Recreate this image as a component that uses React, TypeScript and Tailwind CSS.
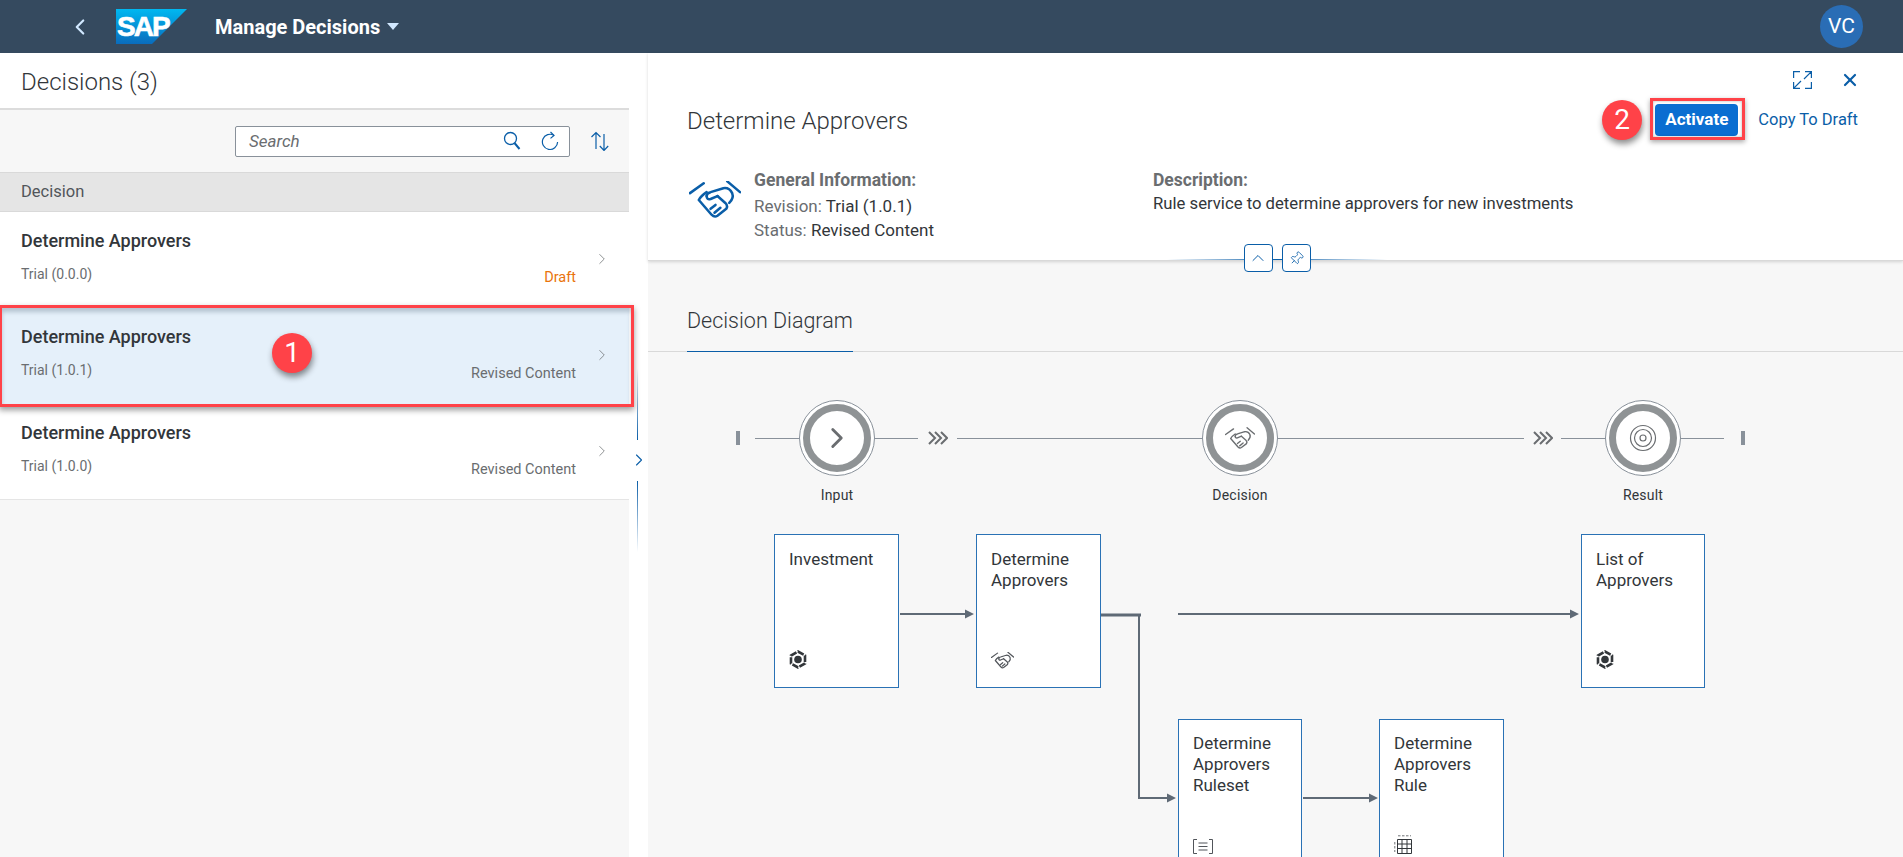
import { ChevronLeft, ChevronRight, ChevronUp, Pin, X } from 'lucide-react';

const rows = [
  { rev: 'Trial (0.0.0)', status: 'Draft', statusCls: 'text-[#e9730c]', selected: false },
  { rev: 'Trial (1.0.1)', status: 'Revised Content', statusCls: 'text-[#6a6d70]', selected: true },
  { rev: 'Trial (1.0.0)', status: 'Revised Content', statusCls: 'text-[#6a6d70]', selected: false },
];

function Handshake({ className, strokeWidth = 2.6 }: { className?: string; strokeWidth?: number }) {
  return (
    <svg viewBox="9 12 53 38" fill="none" stroke="currentColor" strokeWidth={strokeWidth} strokeLinecap="round" strokeLinejoin="round" className={className}>
      <path d="M10 24 24 14M48 12l13 11" />
      <path d="M27 23q-6 4-8 8l13 15q3 3 6 1l9-7q2-3-1-6l-8-7" />
      <path d="M27 27q0-3 4-4l13-4q6-1 9 5 2 5-3 10" />
      <path d="m38 27-7 3q-4 1-4-3M31 40l5-4M35 44l6-5" />
    </svg>
  );
}

function Cube() {
  return (
    <svg viewBox="0 0 18 19" className="h-[19px] w-[18px] text-[#32363a]" fill="none" stroke="currentColor">
      <path d="M9 1.500 16 5.500v8L9 17.500 2 13.500v-8Z" strokeWidth="2.6" strokeDasharray="6.500 1.500" />
      <circle cx="9" cy="9.500" r="3.800" fill="currentColor" stroke="none" />
    </svg>
  );
}

function Ruleset() {
  return (
    <svg viewBox="0 0 20 15" className="h-[15px] w-[20px] text-[#51555a]" fill="none" stroke="currentColor" strokeWidth="1">
      <path d="M4 .5H.5v14H4M16 .5h3.500v14H16M5.500 4h9M5.500 7.500h9M5.500 11h9" />
    </svg>
  );
}

function RuleTable() {
  return (
    <svg viewBox="0 0 18 19" className="h-[19px] w-[18px] text-[#32363a]" fill="none" stroke="currentColor" strokeWidth="1">
      <path d="M3.500 4.500h14v14h-14ZM3.500 9h14M3.500 13.500h14M8 4.500v14M13 4.500v14" />
      <path d="M4 .8h13M.8 7v10" strokeDasharray="2.5 1.500" opacity="0.7" />
    </svg>
  );
}

function Triple() {
  return (
    <svg viewBox="0 0 20 14" className="h-[14px] w-[20px]" fill="none" stroke="#6a6d70" strokeWidth="2">
      <path d="m1 1 6 6-6 6M7 1l6 6-6 6M13 1l6 6-6 6" />
    </svg>
  );
}

function Stage({ left, label, children }: { left: string; label: string; children: React.ReactNode }) {
  return (
    <div className={`absolute top-[48px] flex w-[76px] flex-col items-center ${left}`}>
      <div className="flex h-[76px] w-[76px] items-center justify-center rounded-full border border-[#89919a] bg-white">
        <div className="flex h-[68px] w-[68px] items-center justify-center rounded-full border-[7px] border-[#8f9395] bg-white text-[#6a6d70]">
          {children}
        </div>
      </div>
      <div className="mt-[11px] text-[14px] leading-[16px] tracking-[0.2px] text-[#32363a]">{label}</div>
    </div>
  );
}

function Card({ pos, lines, children }: { pos: string; lines: string[]; children: React.ReactNode }) {
  return (
    <div className={`absolute flex h-[154px] flex-col border border-[#2a72b5] bg-white px-[14px] pb-[18px] ${pos}`}>
      <div className="flex-1 text-[17px] leading-[21px] text-[#32363a]">
        {lines.map((l) => (
          <div key={l}>{l}</div>
        ))}
      </div>
      {children}
    </div>
  );
}

function RedBadge({ n, pos }: { n: string; pos: string }) {
  return (
    <div className={`absolute z-20 flex h-[40px] w-[40px] items-center justify-center rounded-full bg-[#ff4248] text-[28px] text-white shadow-[1px_4px_6px_rgba(0,0,0,0.45)] ${pos}`}>
      {n}
    </div>
  );
}

export default function App() {
  return (
    <div className="flex h-[857px] w-full flex-col overflow-hidden bg-white font-['Roboto',sans-serif] text-[#32363a]">
      <header className="flex h-[53px] shrink-0 items-center bg-[#354a5f] text-white">
        <ChevronLeft size={26} strokeWidth={2} className="ml-[67px] text-[#d1e8ff]" />
        <svg viewBox="0 0 71 35" className="ml-[23px] h-[35px] w-[71px]">
          <defs>
            <linearGradient id="sap" x1="0" y1="0" x2="0" y2="1">
              <stop offset="0" stopColor="#00b8f1" />
              <stop offset="1" stopColor="#0a6cbc" />
            </linearGradient>
          </defs>
          <path d="M0 0h71L36 35H0Z" fill="url(#sap)" />
          <text x="1" y="27" fontFamily="'Liberation Sans',sans-serif" fontWeight="700" fontSize="28" letterSpacing="-2" fill="#fff" stroke="#fff" strokeWidth="0.6">SAP</text>
        </svg>
        <div className="ml-[28px] text-[20px] font-bold">Manage Decisions</div>
        <div className="ml-[7px] h-0 w-0 border-x-[6px] border-t-[7px] border-x-transparent border-t-[#d1e8ff]" />
        <div className="ml-auto mr-[40px] flex h-[43px] w-[43px] items-center justify-center rounded-full bg-[#2a6db5] text-[21px]">VC</div>
      </header>

      <div className="flex min-h-0 flex-1">
        {/* master list */}
        <aside className="relative z-10 flex w-[629px] shrink-0 flex-col bg-[#f7f7f7]">
          <div className="flex h-[57px] items-center border-b-2 border-[#dcdcdc] bg-white pl-[21px] pt-[2px] text-[24px] font-light">Decisions (3)</div>
          <div className="flex h-[62px] items-center pl-[235px]">
            <div className="flex h-[31px] w-[335px] items-center rounded-[2px] border border-[#89919a] bg-white pl-[13px] pr-[10px]">
              <span className="pt-px text-[17px] italic text-[#6a6d70]">Search</span>
              <svg viewBox="0 0 18 20" className="ml-auto h-[20px] w-[18px]" fill="none" stroke="#0a5ea8" strokeWidth="1.3">
                <circle cx="7.500" cy="7.500" r="6" />
                <path d="m11.500 12 5 6" strokeWidth="2" />
              </svg>
              <svg viewBox="0 0 18 20" className="ml-[20px] h-[20px] w-[18px]" fill="none" stroke="#0a5ea8" strokeWidth="1.2">
                <path d="M13 4.400A7.600 7.600 0 1 0 16.600 11" />
                <path d="m9.500 1 3.500 3.400-3.500 3" />
              </svg>
            </div>
            <svg viewBox="0 0 20 20" className="ml-[20px] h-[20px] w-[20px]" fill="none" stroke="#0a5ea8" strokeWidth="1.2">
              <path d="M6 18V1.500M1.500 6 6 1.500 10.500 6M14 3v16.500M9.800 15l4.200 4.500 4.200-4.500" />
            </svg>
          </div>
          <div className="flex h-[40px] items-center border-y border-[#d9d9d9] bg-[#e5e5e5] pl-[21px] text-[16.5px] text-[#51555a]">Decision</div>
          {rows.map((r) => (
            <div
              key={r.rev}
              className={`relative flex h-[96px] items-start pl-[21px] ${r.selected ? 'z-10 bg-[#e5f0fa]' : 'bg-white'} ${r.rev === 'Trial (1.0.0)' ? 'border-b border-[#e5e5e5]' : ''}`}
            >
              <div className="flex-1">
                <div className="mt-[18px] text-[18px] font-medium leading-[22px]">Determine Approvers</div>
                <div className="mt-[13px] text-[14px] leading-[18px] text-[#6a6d70]">{r.rev}</div>
              </div>
              <div className={`mt-[57px] text-[14.5px] leading-[18px] ${r.statusCls}`}>{r.status}</div>
              <ChevronRight size={18} strokeWidth={1} className="ml-[17px] mr-[18px] mt-[38px] text-[#6a6d70]" />
              {r.selected && (
                <>
                  <div className="absolute -left-[1px] -right-[5px] -top-[3px] -bottom-[3px] border-[3px] border-[#ff4248] shadow-[0_3px_6px_rgba(0,0,0,0.4),inset_0_4px_4px_rgba(90,110,130,0.35)]" />
                  <RedBadge n="1" pos="left-[272px] top-[25px]" />
                </>
              )}
            </div>
          ))}
        </aside>

        {/* splitter */}
        <div className="relative w-[19px] shrink-0 bg-white">
          <div className="absolute left-[8px] top-[315px] h-[72px] w-px bg-gradient-to-b from-transparent to-[#0a5ea8]" />
          <ChevronRight size={20} strokeWidth={1.3} className="absolute left-[0px] top-[397px] text-[#0a5ea8]" />
          <div className="absolute left-[8px] top-[428px] h-[71px] w-px bg-gradient-to-b from-[#0a5ea8] to-transparent" />
        </div>

        {/* detail */}
        <main className="flex min-w-0 flex-1 flex-col bg-[#f7f7f7]">
          <section className="relative h-[208px] shrink-0 border-b border-[#d9d9d9] bg-white pl-[39px] pr-[45px] pt-[18px] shadow-[0_1px_3px_rgba(0,0,0,0.15)]">
            <div className="-mr-[2px] flex h-[18px] items-center justify-end gap-[28px] text-[#0a5ea8]">
              <svg viewBox="0 0 19 18" className="h-[18px] w-[19px]" fill="none" stroke="currentColor" strokeWidth="1.2">
                <path d="M.6 7V.6H7M12 .6h6.400V7M18.400 .6 11 8M.6 17.400 8 10M.6 11v6.400H7M12 17.400h6.400V11" />
              </svg>
              <X size={20} strokeWidth={2.6} />
            </div>
            <div className="relative mt-[15px] flex h-[32px] items-center">
              <h1 className="pt-[2px] text-[24px] font-light leading-[32px]">Determine Approvers</h1>
              <button className="relative ml-auto flex h-[32px] w-[83px] items-center justify-center rounded-[4px] bg-[#0a6ed1] text-[17px] font-bold text-white">
                Activate
                <span className="absolute -left-[5px] -right-[7px] -top-[6px] -bottom-[4px] border-[3px] border-[#ff4248] shadow-[0_2px_5px_rgba(0,0,0,0.35),inset_0_0_3px_rgba(0,0,0,0.3)]" />
              </button>
              <span className="ml-[20px] text-[16.5px] text-[#0a5ea8]">Copy To Draft</span>
              <RedBadge n="2" pos="right-[216px] -top-[4px]" />
            </div>
            <div className="mt-[32px] flex">
              <div className="flex w-[466px]">
                <Handshake className="ml-[2px] mt-[13px] h-[38px] w-[52px] text-[#0a5ea8]" />
                <div className="ml-[13px] text-[17px] leading-[24px] text-[#6a6d70]">
                  <div className="text-[17.5px] font-bold">General Information:</div>
                  <div className="mt-[2px]">Revision: <span className="text-[#32363a]">Trial (1.0.1)</span></div>
                  <div>Status: <span className="text-[#32363a]">Revised Content</span></div>
                </div>
              </div>
              <div className="text-[16.7px] leading-[24px] text-[#32363a]">
                <div className="text-[17.5px] font-bold text-[#6a6d70]">Description:</div>
                <div>Rule service to determine approvers for new investments</div>
              </div>
            </div>
            <div className="absolute -bottom-[12px] left-[519px] flex h-[28px] w-[220px] items-center justify-center">
              <div className="absolute inset-x-0 top-[15px] h-px bg-gradient-to-r from-transparent via-[#0a5ea8] to-transparent" />
              <div className="relative flex gap-[9px]">
                <div className="flex h-[28px] w-[29px] items-center justify-center rounded-[4px] border border-[#0a5ea8] bg-white text-[#0a5ea8]">
                  <ChevronUp size={20} strokeWidth={1.2} />
                </div>
                <div className="flex h-[28px] w-[29px] items-center justify-center rounded-[4px] border border-[#0a5ea8] bg-white text-[#0a5ea8]">
                  <Pin size={15} strokeWidth={1.3} className="rotate-45" />
                </div>
              </div>
            </div>
          </section>

          <div className="flex h-[91px] shrink-0 items-end border-b border-[#d9d9d9] pl-[39px]">
            <div className="-mb-px h-[60px] border-b border-[#0a5ea8] pt-[15px] text-[21.5px] font-light leading-[28px]">Decision Diagram</div>
          </div>

          <div className="relative min-h-0 flex-1 overflow-hidden">
            <svg className="absolute inset-0 h-full w-full" fill="none">
              <g stroke="#89919a" strokeWidth="1">
                <path d="M107 86.500H152M226 86.500H270M309 86.500H555M629 86.500H876M913 86.500H958M1032 86.500H1076" />
              </g>
              <path d="M88 79h4v14h-4ZM1093 79h4v14h-4Z" fill="#89919a" />
              <g stroke="#5f6a76" strokeWidth="2">
                <path d="M252 262H318M530 262H923M655 446H722" />
                <path d="M453 263H493" strokeWidth="3" />
                <path d="M491 264V446H520" />
              </g>
              <path d="M317 257.500l9 4.500-9 4.500ZM922 257.500l9 4.500-9 4.500ZM519 441.500l9 4.500-9 4.500ZM721 441.500l9 4.500-9 4.500Z" fill="#5f6a76" />
            </svg>
            <div className="absolute left-[280px] top-[79px]"><Triple /></div>
            <div className="absolute left-[885px] top-[79px]"><Triple /></div>
            <Stage left="left-[151px]" label="Input">
              <ChevronRight size={34} strokeWidth={2} />
            </Stage>
            <Stage left="left-[554px]" label="Decision">
              <Handshake className="h-[23px] w-[30px]" strokeWidth={2.4} />
            </Stage>
            <Stage left="left-[957px]" label="Result">
              <svg viewBox="0 0 28 28" className="h-[28px] w-[28px]" fill="none" stroke="currentColor" strokeWidth="1.2">
                <circle cx="14" cy="14" r="12.500" />
                <circle cx="14" cy="14" r="8.500" />
                <circle cx="14" cy="14" r="3" />
              </svg>
            </Stage>
            <Card pos="left-[126px] top-[182px] w-[125px] pt-[14px]" lines={['Investment']}><Cube /></Card>
            <Card pos="left-[328px] top-[182px] w-[125px] pt-[14px]" lines={['Determine', 'Approvers']}>
              <Handshake className="h-[17px] w-[23px] text-[#51555a]" strokeWidth={2.8} />
            </Card>
            <Card pos="left-[933px] top-[182px] w-[124px] pt-[14px]" lines={['List of', 'Approvers']}><Cube /></Card>
            <Card pos="left-[530px] top-[367px] w-[124px] pt-[13px]" lines={['Determine', 'Approvers', 'Ruleset']}><Ruleset /></Card>
            <Card pos="left-[731px] top-[367px] w-[125px] pt-[13px]" lines={['Determine', 'Approvers', 'Rule']}><RuleTable /></Card>
          </div>
        </main>
      </div>
    </div>
  );
}
